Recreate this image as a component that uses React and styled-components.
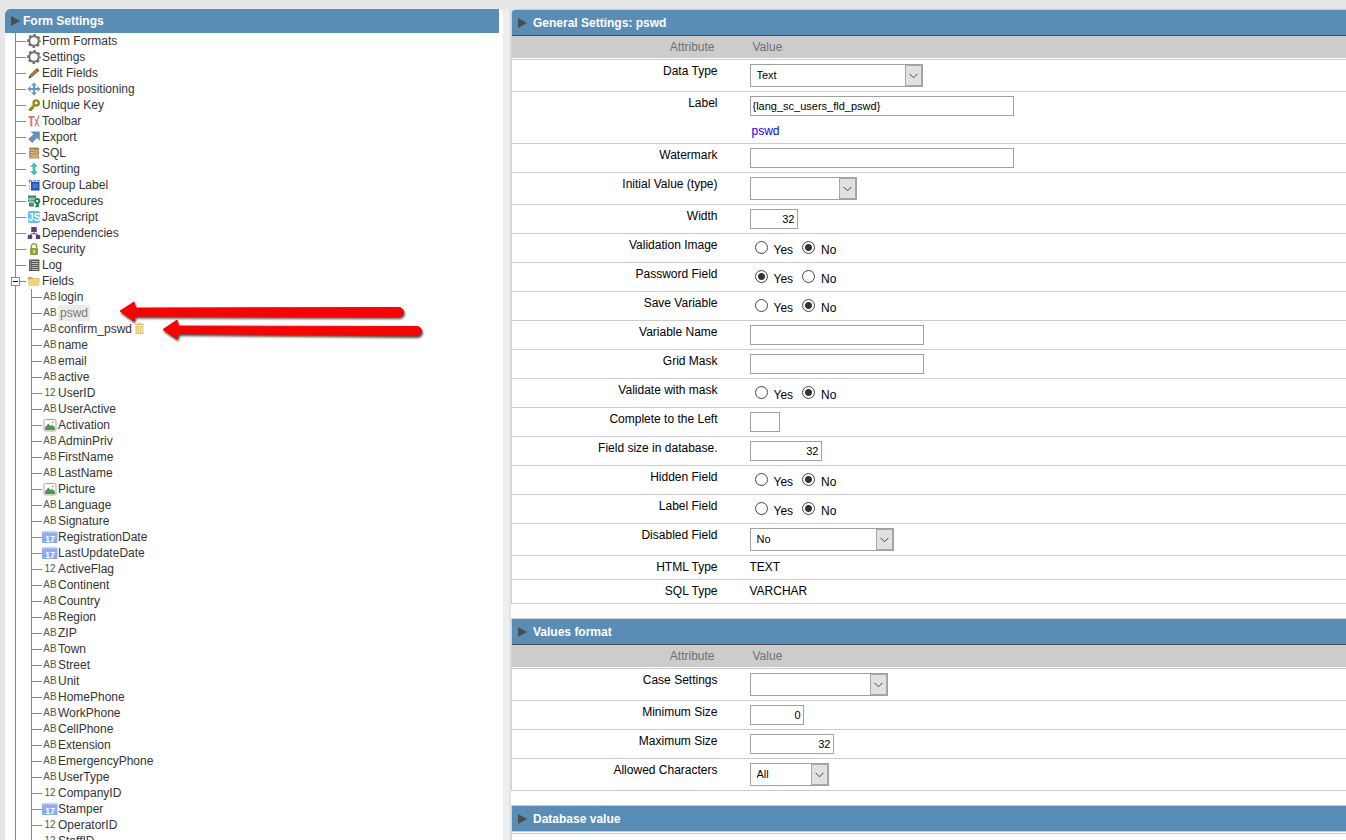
import { useState } from "react";
import styled, { createGlobalStyle } from "styled-components";

const GlobalStyle = createGlobalStyle`
    * {
        box-sizing: border-box;
    }
    body {
        margin: 0;
        overflow: hidden;
        background-color: #e6e6e6;
        color: #000;
        font-family: "Liberation Sans", Arial, sans-serif;
        font-size: 12px;
        line-height: 16px;
    }
`;

const Page = styled.div`
    display: flex;
    height: 100vh;
    padding: 9px 0 0 5px;
`;

const Sidebar = styled.nav`
    position: relative;
    flex: none;
    width: 37vw;
    padding-right: 4px;
    overflow: hidden;
    background-color: #fff;
    border-radius: 5px 5px 0 0;
`;

const Gutter = styled.div`
    flex: none;
    width: 8px;
    background-color: #eee;
    border-right: 2px solid #e4e4e4;
`;

const Main = styled.main`
    flex: 1;
    min-width: 0;
    overflow: hidden;
    background-color: #fff;
    border-top-left-radius: 4px;
`;

const Title = styled.h2`
    margin: 0;
    color: #fff;
    font-size: 12px;
    font-weight: bold;
    line-height: 16px;
`;

const TitleButton = styled.button`
    display: flex;
    align-items: center;
    width: 100%;
    gap: ${({ $gap }) => $gap};
    padding: 4px 6px;
    border: 0;
    background-color: #598db5;
    color: inherit;
    font: inherit;
    text-align: left;
    cursor: pointer;
`;

const SidebarTitle = styled(Title)`
    ${TitleButton} {
        border-top-left-radius: 5px;
    }
`;

const Triangle = styled.span`
    width: 0;
    height: 0;
    border: 5px solid transparent;
    border-left: 9px solid #4d4d4d;
    border-right: 0;
`;

/* ---------- tree ---------- */

const Tree = styled.ul`
    margin: 0 0 0 10px;
    padding: 0;
    border-left: 1px solid #888;
    list-style: none;
`;

const SubTree = styled(Tree)`
    margin-left: 15px;
`;

const Row = styled.div`
    display: flex;
    align-items: center;
    height: 16px;
`;

const Branch = styled.span`
    flex: none;
    width: ${({ $short }) => ($short ? "6px" : "10px")};
    height: 1px;
    background-color: #888;
`;

const Expander = styled.button`
    display: grid;
    place-items: center;
    width: 9px;
    height: 9px;
    margin-left: -5px;
    padding: 0;
    border: 1px solid #888;
    background-color: #fff;

    &::before {
        content: "";
        width: 5px;
        height: 1px;
        background-color: #000;
    }
`;

const TreeLink = styled.a`
    display: flex;
    align-items: center;
    color: #333;
    text-decoration: none;
`;

const TreeLabel = styled.span`
    padding: ${({ $selected }) => ($selected ? "0 2px" : "0")};
    background-color: ${({ $selected }) => ($selected ? "#ececec" : "transparent")};
    color: ${({ $selected }) => ($selected ? "#777" : "#333")};
`;

const Glyph = styled.svg`
    flex: none;
    width: 16px;
    height: 16px;
`;

const TypeMark = styled.span`
    flex: none;
    width: 16px;
    color: #555;
    font-size: 10px;
    line-height: 16px;
    text-align: center;
`;

const TrashButton = styled.button`
    display: flex;
    padding: 0;
    border: 0;
    background: none;
`;

const Arrows = styled.svg`
    position: absolute;
    top: 281px;
    left: 104px;
    width: 330px;
    height: 60px;
    pointer-events: none;
    filter: drop-shadow(1px 2px 1px rgba(0, 0, 0, 0.7));
`;

/* ---------- settings ---------- */

const Block = styled.section`
    margin-bottom: 14px;
    border: 1px solid #ccc;
    border-right: 0;
    border-bottom: 0;

    &:first-child {
        border-top-left-radius: 4px;
        overflow: hidden;
    }
`;

const BlockTitle = styled(Title)`
    border-bottom: 1px solid ${({ $closed }) => ($closed ? "#ccc" : "#4d4d4d")};

    ${TitleButton} {
        padding: 5px 6px 4px;
    }
`;

const ClosedBody = styled.div`
    height: 20px;
    margin-top: 1px;
    border-top: 1px solid #ccc;
`;

const Table = styled.table`
    width: 100%;
    border-spacing: 0;
    table-layout: fixed;
`;

const ColumnHead = styled.th`
    width: ${({ $name }) => ($name ? "25%" : "auto")};
    padding: ${({ $name }) => ($name ? "3px 6px 3px 0" : "3px 0 3px 32px")};
    border-bottom: 1px solid #fff;
    background-color: #ccc;
    background-clip: padding-box;
    color: #707070;
    font-weight: normal;
    text-align: ${({ $name }) => ($name ? "right" : "left")};
`;

const SettingRow = styled.tr`
    & > * {
        border-top: 1px solid #ccc;
        vertical-align: top;
    }
    &:last-child > * {
        border-bottom: 1px solid #ccc;
    }
`;

const NameCell = styled.th`
    padding: ${({ $plain }) => ($plain ? "3px 3px 4px 0" : "3px 3px 0 0")};
    font-weight: normal;
    text-align: right;
`;

const ValueCell = styled.td`
    padding: ${({ $plain }) => ($plain ? "3px 0 4px 29px" : "4px 0 4px 29px")};
`;

const TextInput = styled.input`
    display: block;
    width: ${({ $width }) => $width};
    height: 20px;
    padding: 0 2px 1px;
    border: 1px solid #a0a0a0;
    background-color: #fff;
    color: #000;
    font-family: inherit;
    font-size: 11px;
    text-align: ${({ $number }) => ($number ? "right" : "left")};
`;

const SelectBox = styled.div`
    position: relative;
    width: ${({ $width }) => $width};
`;

const Select = styled.select`
    appearance: none;
    display: block;
    width: 100%;
    height: 23px;
    padding: 0 20px 1px 6px;
    border: 1px solid #a0a0a0;
    border-radius: 0;
    background-color: #fff;
    color: #000;
    font-family: inherit;
    font-size: 11px;
`;

const SelectArrow = styled.span`
    position: absolute;
    top: 1px;
    right: 1px;
    bottom: 1px;
    display: grid;
    place-items: center;
    width: 17px;
    border: 1px solid #a8a8a8;
    background-color: #e1e1e1;
    pointer-events: none;
`;

const FieldLink = styled.a`
    display: block;
    width: fit-content;
    margin-top: 7px;
    padding-left: 2px;
    color: #00f;
    text-decoration: none;
`;

const RadioGroup = styled.div`
    display: flex;
    gap: 9px;
    height: 20px;
    padding: 3px 0 0 5px;
`;

const RadioLabel = styled.label`
    display: flex;
    align-items: flex-end;
    gap: 6px;
    height: 17px;
`;

const Radio = styled.input`
    appearance: none;
    width: 13px;
    height: 13px;
    margin: 0 0 4px;
    border: 1px solid #444;
    border-radius: 50%;
    background-color: #fff;

    &:checked {
        background-image: radial-gradient(circle, #333 3px, transparent 4px);
    }
`;

const glyphs = {
    gear: (
        <g fill="none" stroke="#707070">
            <circle cx="8" cy="8" r="4.7" strokeWidth="2" />
            <circle cx="8" cy="8" r="6" strokeWidth="1.8" strokeDasharray="2.6 2.11" strokeDashoffset="1.3" />
        </g>
    ),
    pencil: (
        <g>
            <path d="M2.6 13.4l1-3.6 7.4-6.8 2.6 2.4-7.4 6.6z" fill="#a37539" />
            <path d="M2.6 13.4l.8-2.4 1.6 1.5z" fill="#4a3820" />
            <path d="M10 4l2.6 2.4" stroke="#7d5525" />
        </g>
    ),
    move: (
        <path
            d="M8 1.5l2.9 3.1H9.1v2.3h2.5V5.1L14.5 8l-2.9 2.9V9.1H9.1v2.3h1.8L8 14.5l-2.9-3.1h1.800V9.100H4.400v1.800L1.500 8l2.900-2.900v1.800H6.900V4.600H5.100z"
            fill="#6496c6"
        />
    ),
    key: (
        <g stroke="#8d8d12" fill="none">
            <circle cx="10.2" cy="6" r="2.6" strokeWidth="2.4" />
            <path d="M8.3 8L3 13.2M4.400 11.600l1.800 1.600M6.200 9.800l1.600 1.500" strokeWidth="2" />
        </g>
    ),
    tools: (
        <g stroke="#df7474" fill="none">
            <path d="M2.5 4h6" strokeWidth="2.2" />
            <path d="M5.3 5v8.500" strokeWidth="2" />
            <path d="M9.200 6l3.800 7.500M13 2.500L9 13.500" strokeWidth="1.300" />
        </g>
    ),
    export: <path d="M4.500 2.500h9.300v9.200L10.900 9l-4.600 5-4.100-4.100L7.400 5.200z" fill="#6492c0" />,
    sql: (
        <g>
            <path d="M3 2.500h9.500l.8 1.200-.6 2 .6 2-.6 2 .6 3.800H3.400L3 11l.5-2-.5-2 .5-2z" fill="#a98855" />
            <path d="M4.500 5l7.500 1M4.500 7.400l7.500 1M4.500 9.800l7.500 1M4.500 12h7.500" stroke="#e2c797" />
        </g>
    ),
    sort: <path d="M8 1.500l3.800 4.300H9.400v4.400h2.400L8 14.500l-3.800-4.300h2.400V5.800H4.200z" fill="#3fbcb8" />,
    group: (
        <g>
            <path d="M3.500 2v12M2 4.500h12" stroke="#9cb8e6" strokeDasharray="2 1" />
            <path d="M3 3h3v2H3zM7 3h3v1H7zM11 3h3v1h-3z" fill="#7095d8" />
            <rect x="5" y="5" width="8.500" height="8.500" fill="#1e50b8" />
            <rect x="6.500" y="6.500" width="5.500" height="5" fill="#4477dc" />
        </g>
    ),
    procedures: (
        <g>
            <path d="M2 2.500h8v3H2zM2 6.500h6v2H2zM3 9.500h5v4H3z" fill="#268450" />
            <path d="M3 4.200h6M3 7.600h4M4 11h4" stroke="#9cc8ae" strokeWidth=".7" />
            <circle cx="11.200" cy="8" r="2.100" fill="none" stroke="#268450" strokeWidth="2" />
            <path d="M9 14.200l1.500-4h2.400v4z" fill="#268450" />
        </g>
    ),
    js: (
        <g>
            <rect x="2" y="2" width="12" height="12" rx="2" fill="#65bff3" />
            <text x="8.200" y="12" fill="#fff" fontSize="10" fontWeight="bold" textAnchor="middle">JS</text>
        </g>
    ),
    dependencies: (
        <g fill="#5a426f">
            <path d="M5.200 2h5.600v5H5.200zM1.800 10h4.400v4H1.800zM9.800 10h4.400v4H9.800z" />
            <path d="M8 6.500V8.800M4 10.500l1-1.700h6l1 1.700" fill="none" stroke="#5a426f" />
        </g>
    ),
    lock: (
        <g>
            <path d="M5.400 8V5.300a2.600 2.600 0 015.200 0V8" fill="none" stroke="#94a337" strokeWidth="1.500" />
            <rect x="4" y="7" width="8" height="7" rx="1" fill="#94a337" />
            <path d="M8 9.200v2.600" stroke="#fff" strokeWidth="1.400" />
        </g>
    ),
    log: (
        <g>
            <rect x="3" y="2.500" width="10.400" height="11.500" fill="#555" />
            <path d="M5.800 4.500h6.600M5.800 6.500h6.600M5.800 8.500h6.600M5.800 10.500h6.600M5.800 12.500h6.600" stroke="#bbb" />
            <path d="M4.400 3.500v10" stroke="#ddd" strokeDasharray="1 1" />
        </g>
    ),
    folder: (
        <g>
            <path d="M1.500 4h4.600l1.200 1H13v8H3z" fill="#cfb34f" />
            <path d="M1.500 6.200h5l1-1H14L13.200 13H3z" fill="#ecd580" />
        </g>
    ),
    image: (
        <g>
            <rect x="2" y="2.500" width="12" height="11.500" rx="1.500" fill="#fff" stroke="#a5a5a5" />
            <path d="M3 13v-2.500L6.300 6.500l2.200 2.600 1.500-1.400 3 3V13z" fill="#4a9a4c" />
            <circle cx="10.800" cy="5.200" r="1" fill="#c3ad68" />
        </g>
    ),
    calendar: (
        <g>
            <rect x="0" y="2.500" width="15.500" height="11.500" fill="#8eacf4" />
            <path d="M1 3.500h14" stroke="#dbe5ff" strokeDasharray="1 1.500" />
            <text x="8" y="13" fill="#fff" fontSize="9" fontWeight="bold" textAnchor="middle">17</text>
        </g>
    ),
    trash: (
        <g fill="none" stroke="#dfc362">
            <path d="M3 3.500h9M5.800 2.500h3.400" />
            <path d="M4 5h7v7.500H4z" fill="#f5e7ac" />
            <path d="M6.300 5.500v7M8.700 5.500v7" />
        </g>
    ),
};

const menu = [
    ["gear", "Form Formats"],
    ["gear", "Settings"],
    ["pencil", "Edit Fields"],
    ["move", "Fields positioning"],
    ["key", "Unique Key"],
    ["tools", "Toolbar"],
    ["export", "Export"],
    ["sql", "SQL"],
    ["sort", "Sorting"],
    ["group", "Group Label"],
    ["procedures", "Procedures"],
    ["js", "JavaScript"],
    ["dependencies", "Dependencies"],
    ["lock", "Security"],
    ["log", "Log"],
];

const fields = [
    ["AB", "login"],
    ["AB", "pswd"],
    ["AB", "confirm_pswd"],
    ["AB", "name"],
    ["AB", "email"],
    ["AB", "active"],
    ["12", "UserID"],
    ["AB", "UserActive"],
    ["image", "Activation"],
    ["AB", "AdminPriv"],
    ["AB", "FirstName"],
    ["AB", "LastName"],
    ["image", "Picture"],
    ["AB", "Language"],
    ["AB", "Signature"],
    ["calendar", "RegistrationDate"],
    ["calendar", "LastUpdateDate"],
    ["12", "ActiveFlag"],
    ["AB", "Continent"],
    ["AB", "Country"],
    ["AB", "Region"],
    ["AB", "ZIP"],
    ["AB", "Town"],
    ["AB", "Street"],
    ["AB", "Unit"],
    ["AB", "HomePhone"],
    ["AB", "WorkPhone"],
    ["AB", "CellPhone"],
    ["AB", "Extension"],
    ["AB", "EmergencyPhone"],
    ["AB", "UserType"],
    ["12", "CompanyID"],
    ["calendar", "Stamper"],
    ["12", "OperatorID"],
    ["12", "StaffID"],
];

const general = [
    { name: "Data Type", type: "select", value: "Text", width: "173px" },
    { name: "Label", type: "text", value: "{lang_sc_users_fld_pswd}", width: "264px", link: "pswd" },
    { name: "Watermark", type: "text", width: "264px" },
    { name: "Initial Value (type)", type: "select", width: "107px" },
    { name: "Width", type: "number", value: "32", width: "48px" },
    { name: "Validation Image", type: "radio", value: "No" },
    { name: "Password Field", type: "radio", value: "Yes" },
    { name: "Save Variable", type: "radio", value: "No" },
    { name: "Variable Name", type: "text", width: "174px" },
    { name: "Grid Mask", type: "text", width: "174px" },
    { name: "Validate with mask", type: "radio", value: "No" },
    { name: "Complete to the Left", type: "text", width: "30px" },
    { name: "Field size in database.", type: "number", value: "32", width: "72px" },
    { name: "Hidden Field", type: "radio", value: "No" },
    { name: "Label Field", type: "radio", value: "No" },
    { name: "Disabled Field", type: "select", value: "No", width: "144px" },
    { name: "HTML Type", type: "plain", value: "TEXT" },
    { name: "SQL Type", type: "plain", value: "VARCHAR" },
];

const valuesFormat = [
    { name: "Case Settings", type: "select", width: "138px" },
    { name: "Minimum Size", type: "number", value: "0", width: "54px" },
    { name: "Maximum Size", type: "number", value: "32", width: "84px" },
    { name: "Allowed Characters", type: "select", value: "All", width: "79px" },
];

const toId = (name) => name.toLowerCase().replace(/[^a-z]+/g, "-");

const Icon = ({ name }) => {
    if (!glyphs[name]) return <TypeMark>{name}</TypeMark>;
    return (
        <Glyph viewBox="0 0 16 16" aria-hidden="true">
            {glyphs[name]}
        </Glyph>
    );
};

const TreeRow = ({ icon, label, selected }) => (
    <TreeLink href={`#${label}`}>
        <Icon name={icon} />
        <TreeLabel $selected={selected}>{label}</TreeLabel>
    </TreeLink>
);

const FormTree = () => {
    const [open, setOpen] = useState(true);

    return (
        <Tree>
            {menu.map(([icon, label]) => (
                <li key={label}>
                    <Row>
                        <Branch />
                        <TreeRow icon={icon} label={label} />
                    </Row>
                </li>
            ))}
            <li>
                <Row>
                    <Expander type="button" aria-label="Toggle fields" onClick={() => setOpen(!open)} />
                    <Branch $short />
                    <TreeRow icon="folder" label="Fields" />
                </Row>
                {open && (
                    <SubTree>
                        {fields.map(([icon, label]) => (
                            <li key={label}>
                                <Row>
                                    <Branch />
                                    <TreeRow icon={icon} label={label} selected={label === "pswd"} />
                                    {label === "confirm_pswd" && (
                                        <TrashButton type="button" aria-label="Delete field">
                                            <Icon name="trash" />
                                        </TrashButton>
                                    )}
                                </Row>
                            </li>
                        ))}
                    </SubTree>
                )}
            </li>
        </Tree>
    );
};

const Control = ({ id, item }) => {
    if (item.type === "plain") return item.value;

    if (item.type === "select") {
        return (
            <SelectBox $width={item.width}>
                <Select id={id} defaultValue={item.value}>
                    <option>{item.value}</option>
                </Select>
                <SelectArrow>
                    <svg width="9" height="6" viewBox="0 0 9 6" fill="none" stroke="#444">
                        <path d="M.5 .8l4 4 4-4" />
                    </svg>
                </SelectArrow>
            </SelectBox>
        );
    }

    if (item.type === "radio") {
        return (
            <RadioGroup role="radiogroup" aria-label={item.name}>
                {["Yes", "No"].map((option) => (
                    <RadioLabel key={option}>
                        <Radio type="radio" name={id} defaultChecked={item.value === option} />
                        {option}
                    </RadioLabel>
                ))}
            </RadioGroup>
        );
    }

    return (
        <>
            <TextInput
                id={id}
                type="text"
                defaultValue={item.value}
                $width={item.width}
                $number={item.type === "number"}
            />
            {item.link && <FieldLink href={`#${item.link}`}>{item.link}</FieldLink>}
        </>
    );
};

const SettingsBlock = ({ title, items }) => (
    <Block>
        <BlockTitle $closed={!items}>
            <TitleButton type="button" $gap="6px">
                <Triangle />
                {title}
            </TitleButton>
        </BlockTitle>
        {items ? (
            <Table>
                <thead>
                    <tr>
                        <ColumnHead scope="col" $name>Attribute</ColumnHead>
                        <ColumnHead scope="col">Value</ColumnHead>
                    </tr>
                </thead>
                <tbody>
                    {items.map((item) => {
                        const id = toId(item.name);
                        const plain = item.type === "plain";
                        const labelled = !plain && item.type !== "radio";
                        return (
                            <SettingRow key={id}>
                                <NameCell scope="row" $plain={plain}>
                                    {labelled ? <label htmlFor={id}>{item.name}</label> : item.name}
                                </NameCell>
                                <ValueCell $plain={plain}>
                                    <Control id={id} item={item} />
                                </ValueCell>
                            </SettingRow>
                        );
                    })}
                </tbody>
            </Table>
        ) : (
            <ClosedBody />
        )}
    </Block>
);

const App = () => {
    return (
        <>
            <GlobalStyle />
            <Page>
                <Sidebar>
                    <SidebarTitle>
                        <TitleButton type="button" $gap="3px">
                            <Triangle />
                            Form Settings
                        </TitleButton>
                    </SidebarTitle>
                    <FormTree />
                    <Arrows viewBox="0 0 330 60" fill="#fe0000" stroke="#fe0000" strokeLinejoin="round" aria-hidden="true">
                        <path d="M11 21l14-9 1.5 6L290 17.5a4.5 4.5 0 010 9L26 26l-1 5z" />
                        <path d="M54 39.5l14-9.5 1.5 6L308 36.5a4.5 4.5 0 010 9L69.5 43.5 68 49z" />
                    </Arrows>
                </Sidebar>
                <Gutter />
                <Main>
                    <SettingsBlock title="General Settings: pswd" items={general} />
                    <SettingsBlock title="Values format" items={valuesFormat} />
                    <SettingsBlock title="Database value" />
                </Main>
            </Page>
        </>
    );
};

export default App;
